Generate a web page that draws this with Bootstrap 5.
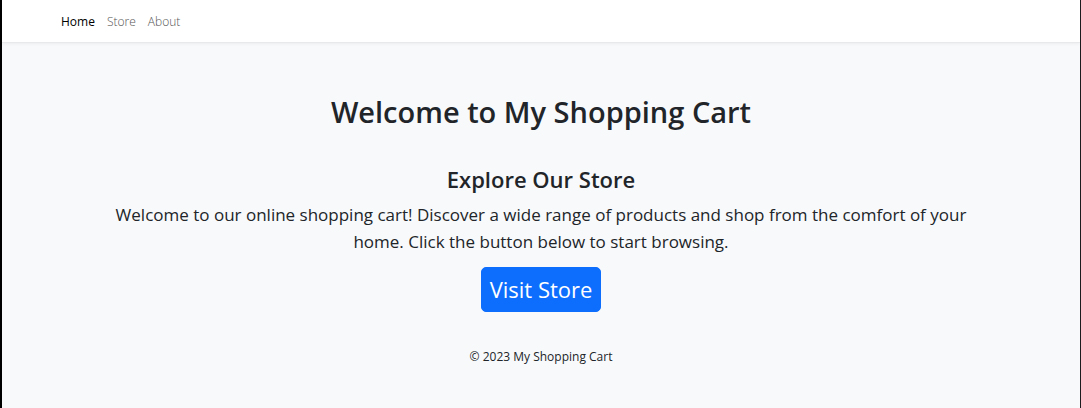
<!DOCTYPE html>
<html lang="en">
<head>
<meta charset="utf-8">
<meta name="viewport" content="width=device-width, initial-scale=1">
<title>My Shopping Cart</title>
<link href="https://cdn.jsdelivr.net/npm/bootstrap@5.3.0/dist/css/bootstrap.min.css" rel="stylesheet">
<style>
  body { font-family: "Open Sans", "Noto Sans", sans-serif; background: #f8f9fb; border-left: 2px solid #000; border-right: 1px solid #1c1c1e; min-height: 100vh; color: #212529; }
  .site-nav { background: #fff; border-bottom: 1px solid #e8e9eb; box-shadow: 0 1px 3px #0000000d; padding: 13px 53px 11px; font-size: 12px; line-height: 18px; }
  .site-nav .navbar-nav .nav-link { padding: 0 6px; color: #555; font-weight: 300; }
  .site-nav .navbar-nav .nav-link.active { color: #000; }
  .page-title { font-size: 29px; line-height: 42px; font-weight: 600; }
  .section-title { font-size: 22px; line-height: 28px; font-weight: 600; }
  .intro { font-size: 17px; line-height: 27px; }
  .visit { font-size: 22px; line-height: 33px; padding: 5px 8px; border-radius: 5px; }
  .copyright { font-size: 12px; line-height: 18px; padding-top: 20px; }
</style>
</head>
<body>
<nav class="navbar navbar-expand site-nav">
  <ul class="navbar-nav">
    <li class="nav-item"><a class="nav-link active fw-normal" href="#" aria-current="page">Home</a></li>
    <li class="nav-item"><a class="nav-link" href="#">Store</a></li>
    <li class="nav-item"><a class="nav-link" href="#">About</a></li>
  </ul>
</nav>
<main class="container text-center pt-5 px-5">
  <h1 class="page-title mb-4 pb-2">Welcome to My Shopping Cart</h1>
  <section>
    <h2 class="section-title mb-2">Explore Our Store</h2>
    <p class="intro mb-2 pb-1">Welcome to our online shopping cart! Discover a wide range of products and shop from the comfort of your home. Click the button below to start browsing.</p>
    <a class="btn btn-primary visit" href="#">Visit Store</a>
  </section>
</main>
<footer class="text-center mt-3 copyright">© 2023 My Shopping Cart</footer>
<script src="https://cdn.jsdelivr.net/npm/bootstrap@5.3.0/dist/js/bootstrap.bundle.min.js"></script>
</body>
</html>
